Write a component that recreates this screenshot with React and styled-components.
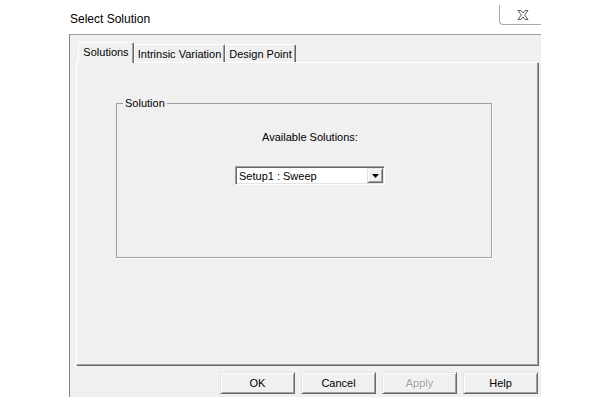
import React from "react";
import styled, { createGlobalStyle } from "styled-components";

const Global = createGlobalStyle`
  html, body { margin: 0; padding: 0; background: #ffffff; }
  body { font-family: "Liberation Sans", Arial, sans-serif; color: #000; }
  * { box-sizing: border-box; }
`;

const Page = styled.div`
  width: 600px;
  height: 413px;
  padding-left: 69px;
  background: #ffffff;
  overflow: hidden;
`;

const Window = styled.div`
  width: 472px;
  display: flex;
  flex-direction: column;
`;

const TitleBar = styled.div`
  height: 34px;
  display: flex;
  align-items: flex-start;
`;

const Title = styled.div`
  margin-top: 12px;
  margin-left: 1px;
  font-size: 12px;
  line-height: 15px;
  color: #000;
`;

const CloseButton = styled.div`
  margin-left: auto;
  margin-top: 5px;
  width: 42px;
  height: 20px;
  border-left: 1px solid #a8a8a8;
  border-bottom: 1px solid #a8a8a8;
  border-bottom-left-radius: 4px;
  display: flex;
  align-items: center;
  justify-content: center;
  padding-left: 4px;
`;

const Body = styled.div`
  height: 363px;
  background: #f0f0f0;
  border-top: 1px solid #a0a0a0;
  border-left: 1px solid #858585;
  padding: 7px 3px 0 6px;
  display: flex;
  flex-direction: column;
`;

const TabStrip = styled.div`
  height: 20px;
  display: flex;
  align-items: flex-end;
  padding-left: 2px;
  position: relative;
  z-index: 1;
`;

const Tab = styled.div`
  width: ${(p) => p.$w}px;
  height: ${(p) => (p.$active ? 21 : 18)}px;
  margin-bottom: ${(p) => (p.$active ? -1 : 0)}px;
  background: #f0f0f0;
  border-top: 1px solid #ffffff;
  border-left: 1px solid #ffffff;
  border-right: 1px solid #696969;
  box-shadow: inset -1px 0 0 #a0a0a0;
  border-top-left-radius: 2px;
  border-top-right-radius: 2px;
  font-size: 11px;
  line-height: 13px;
  display: flex;
  justify-content: center;
  padding-top: 3px;
  white-space: nowrap;
`;

const TabPanel = styled.div`
  height: 303px;
  border-top: 1px solid #ffffff;
  border-left: 1px solid #ffffff;
  border-right: 1px solid #a0a0a0;
  border-bottom: 1px solid #a0a0a0;
  box-shadow: 1px 1px 0 #696969;
  padding: 34px 0 0 39px;
`;

const GroupBox = styled.fieldset`
  margin: 0;
  padding: 0;
  width: 376px;
  height: 161px;
  border: 1px solid #a0a0a0;
  box-shadow: 1px 1px 0 #ffffff;
  min-inline-size: 0;
`;

const Legend = styled.legend`
  margin-left: 6px;
  padding: 0 2px;
  font-size: 11px;
  line-height: 13px;
  color: #000;
`;

const GroupContent = styled.div`
  padding-left: 12px;
  display: flex;
  flex-direction: column;
  align-items: center;
`;

const FieldLabel = styled.div`
  margin-top: 21px;
  font-size: 11px;
  line-height: 13px;
`;

const Select = styled.div`
  margin-top: 22px;
  width: 150px;
  height: 19px;
  background: #ffffff;
  border: 1px solid;
  border-color: #a0a0a0 #ffffff #ffffff #a0a0a0;
  box-shadow: inset 1px 1px 0 #696969, inset -1px -1px 0 #e3e3e3;
  display: flex;
  align-items: center;
  padding: 1px 1px 1px 3px;
`;

const SelectText = styled.div`
  flex: 1;
  font-size: 11px;
  line-height: 13px;
  padding-top: 1px;
`;

const ArrowButton = styled.div`
  width: 16px;
  height: 15px;
  background: #f0f0f0;
  border: 1px solid;
  border-color: #e3e3e3 #696969 #696969 #e3e3e3;
  box-shadow: inset 1px 1px 0 #ffffff, inset -1px -1px 0 #a0a0a0;
  display: flex;
  align-items: center;
  justify-content: center;
`;

const ButtonRow = styled.div`
  margin-top: 7px;
  display: flex;
  justify-content: flex-end;
  gap: 6px;
`;

const Button = styled.div`
  width: 75px;
  height: 22px;
  background: #f0f0f0;
  border: 1px solid;
  border-color: #e3e3e3 #696969 #696969 #e3e3e3;
  box-shadow: inset 1px 1px 0 #ffffff, inset -1px -1px 0 #a0a0a0;
  display: flex;
  align-items: center;
  justify-content: center;
  font-size: 11px;
  color: ${(p) => (p.$disabled ? "#a0a0a0" : "#000")};
  text-shadow: ${(p) => (p.$disabled ? "1px 1px 0 #ffffff" : "none")};
`;

const CloseIcon = () => (
  <svg width="12" height="10" viewBox="0 0 12 10">
    <path
      d="M1 0.5 H4 L6 3 L8 0.5 H11 L7.6 5 L11 9.5 H8 L6 7 L4 9.5 H1 L4.4 5 Z"
      fill="#ffffff"
      stroke="#5a5a5a"
      strokeWidth="1"
      strokeLinejoin="round"
    />
  </svg>
);

const DownArrow = () => (
  <svg width="7" height="4" viewBox="0 0 7 4">
    <path d="M0 0 H7 L3.5 4 Z" fill="#000" />
  </svg>
);

export default function App() {
  return (
    <>
      <Global />
      <Page>
        <Window>
          <TitleBar>
            <Title>Select Solution</Title>
            <CloseButton>
              <CloseIcon />
            </CloseButton>
          </TitleBar>
          <Body>
            <TabStrip>
              <Tab $active $w={56}>Solutions</Tab>
              <Tab $w={91}>Intrinsic Variation</Tab>
              <Tab $w={71}>Design Point</Tab>
            </TabStrip>
            <TabPanel>
              <GroupBox>
                <Legend>Solution</Legend>
                <GroupContent>
                  <FieldLabel>Available Solutions:</FieldLabel>
                  <Select>
                    <SelectText>Setup1 : Sweep</SelectText>
                    <ArrowButton>
                      <DownArrow />
                    </ArrowButton>
                  </Select>
                </GroupContent>
              </GroupBox>
            </TabPanel>
            <ButtonRow>
              <Button>OK</Button>
              <Button>Cancel</Button>
              <Button $disabled>Apply</Button>
              <Button>Help</Button>
            </ButtonRow>
          </Body>
        </Window>
      </Page>
    </>
  );
}
